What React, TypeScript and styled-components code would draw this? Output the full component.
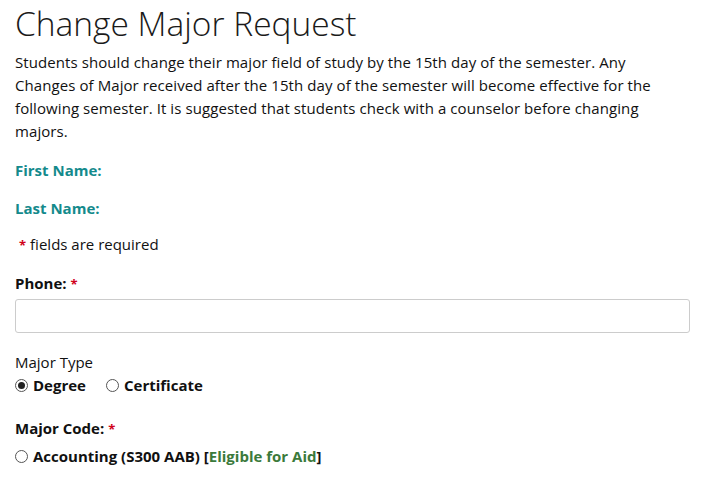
import styled, { createGlobalStyle } from "styled-components";

const GlobalStyle = createGlobalStyle`
    body {
        margin: 0;
        background: #fff;
        font-family: "Open Sans", "Noto Sans", sans-serif;
        color: #111;
    }
`;

const Page = styled.div`
    padding: 0 14px 0 15px;
`;

const Title = styled.h1`
    margin: 0;
    padding-top: 1px;
    font-size: 33.5px;
    font-weight: 300;
    line-height: 44px;
    color: #1a1a1a;
`;

const Intro = styled.p`
    margin: 6px 0 0;
    font-size: 15px;
    line-height: 23px;
    letter-spacing: 0.08px;
    white-space: nowrap;
`;

const NameLabel = styled.div`
    margin-top: ${(p) => p.$gap}px;
    font-size: 15px;
    font-weight: 700;
    line-height: 20px;
    color: #148a8c;
`;

const Note = styled.div`
    margin-top: 16px;
    padding-left: 4px;
    font-size: 15px;
    line-height: 20px;
`;

const Star = styled.span`
    color: #d0021b;
    font-size: 13px;
    font-weight: 700;
    margin-right: ${(p) => p.$right || 0}px;
`;

const FieldLabel = styled.div`
    margin-top: ${(p) => p.$gap}px;
    font-size: 15px;
    font-weight: 700;
    line-height: 20px;
`;

const Input = styled.input`
    display: block;
    box-sizing: border-box;
    width: 100%;
    height: 34px;
    margin-top: 5px;
    border: 1px solid #cccccc;
    border-radius: 3px;
    font: inherit;
`;

const GroupLabel = styled.div`
    margin-top: 19px;
    font-size: 15px;
    line-height: 20px;
`;

const RadioRow = styled.div`
    display: flex;
    gap: 20px;
    margin-top: ${(p) => p.$gap}px;
`;

const RadioOption = styled.label`
    display: flex;
    align-items: center;
    gap: 5px;
    font-size: 15px;
    font-weight: 700;
    line-height: 20px;
`;

const RadioDot = styled.span`
    box-sizing: border-box;
    width: 13px;
    height: 13px;
    border: 1px solid #555;
    border-radius: 50%;
    display: flex;
    align-items: center;
    justify-content: center;
    &::after {
        content: "";
        width: 7px;
        height: 7px;
        border-radius: 50%;
        background: ${(p) => (p.$checked ? "#222" : "transparent")};
    }
`;

const Aid = styled.span`
    color: #3b7a3b;
`;

export default function App() {
    return (
        <>
            <GlobalStyle />
            <Page>
                <Title>Change Major Request</Title>
                <Intro>
                    Students should change their major field of study by the 15th day of the semester. Any
                    <br />
                    Changes of Major received after the 15th day of the semester will become effective for the
                    <br />
                    following semester. It is suggested that students check with a counselor before changing
                    <br />
                    majors.
                </Intro>
                <NameLabel $gap={17}>First Name:</NameLabel>
                <NameLabel $gap={18}>Last Name:</NameLabel>
                <Note>
                    <Star $right={4}>*</Star>fields are required
                </Note>
                <FieldLabel $gap={18}>
                    Phone: <Star>*</Star>
                </FieldLabel>
                <Input type="text" />
                <GroupLabel>Major Type</GroupLabel>
                <RadioRow $gap={3}>
                    <RadioOption>
                        <RadioDot $checked />
                        Degree
                    </RadioOption>
                    <RadioOption>
                        <RadioDot />
                        Certificate
                    </RadioOption>
                </RadioRow>
                <FieldLabel $gap={23}>
                    Major Code: <Star>*</Star>
                </FieldLabel>
                <RadioRow $gap={7}>
                    <RadioOption>
                        <RadioDot />
                        <span>
                            Accounting (S300 AAB) [<Aid>Eligible for Aid</Aid>]
                        </span>
                    </RadioOption>
                </RadioRow>
            </Page>
        </>
    );
}
